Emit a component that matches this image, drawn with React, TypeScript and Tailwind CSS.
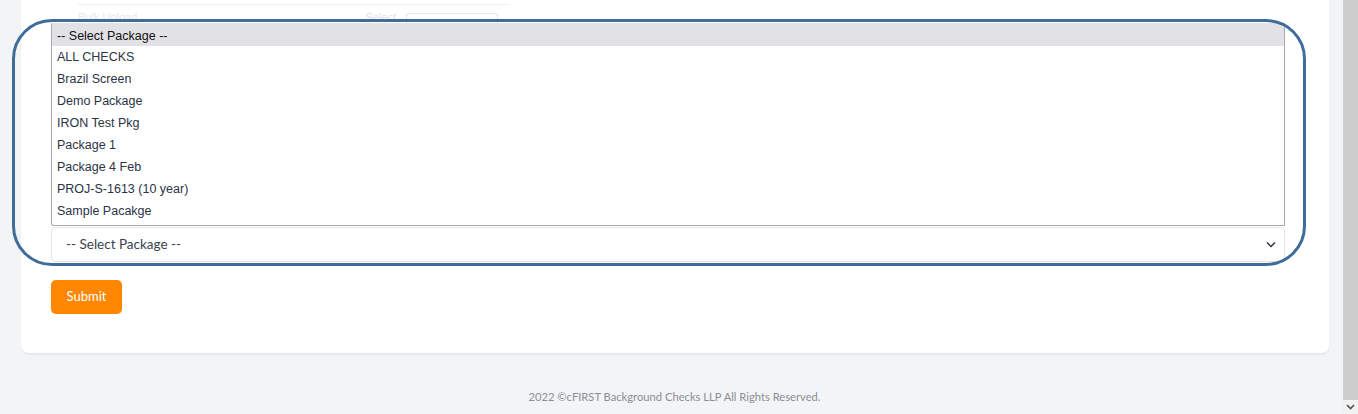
import React from "react";

const items = [
  "ALL CHECKS",
  "Brazil Screen",
  "Demo Package",
  "IRON Test Pkg",
  "Package 1",
  "Package 4 Feb",
  "PROJ-S-1613 (10 year)",
  "Sample Pacakge",
];

export default function App() {
  return (
    <div className="flex h-[414px] w-full overflow-hidden bg-[#f3f4f6]">
      <div className="flex min-w-0 flex-1 flex-col">
        <div className="ml-[21px] mr-[14px] rounded-b-[8px] border-b border-[#e6e7ea] bg-white pl-[30px] pr-[44px] pb-[39px] shadow-[0_1px_2px_rgba(0,0,0,0.04)]">
          {/* faded content behind the open list */}
          <div className="ml-[27px] w-[430px] border-b border-[#efefef] h-[5px]" />
          <div className="ml-[27px] flex h-[18px] w-[420px] items-end justify-between">
            <span className="text-[11px] leading-none text-[#e6e8eb] [font-family:'Liberation_Sans',Arial,sans-serif]">
              Bulk Upload
            </span>
            <div className="flex items-end gap-[10px]">
              <span className="text-[11px] leading-none text-[#dfe1e5] [font-family:'Liberation_Sans',Arial,sans-serif]">
                Select
              </span>
              <div className="h-[10px] w-[92px] rounded-t-[3px] border border-b-0 border-[#e6e8eb]" />
            </div>
          </div>

          <div className="relative mt-[204px]">
            {/* annotation outline */}
            <div className="pointer-events-none absolute -left-[39px] -right-[21px] -top-[208px] -bottom-[4px] z-20 rounded-[40px] border-[3px] border-[#3f6d9b]" />

            {/* open list */}
            <div className="absolute bottom-full left-0 right-0 z-10 mb-[1px] h-[203px] rounded-bl-[3px] border border-[#a9a9ad] border-t-[#e4e4e8] bg-white pt-0 [font-family:'Liberation_Sans',Arial,sans-serif] text-[12.5px]">
              <div className="flex h-[22px] items-center bg-[#e1e1e6] pl-[5px] pt-[2px] text-[#111]">
                -- Select Package --
              </div>
              {items.map((it) => (
                <div
                  key={it}
                  className="flex h-[22px] items-center pl-[5px] pt-[1.5px] text-[#2b3345]"
                >
                  {it}
                </div>
              ))}
            </div>

            {/* select */}
            <div className="flex h-[35px] items-center justify-between rounded-[4px] border border-[#e2e5ea] bg-white pl-[14px] pr-[8px] [font-family:Lato,'Noto_Sans',sans-serif] text-[13.5px] text-[#3b4253]">
              <span>-- Select Package --</span>
              <svg width="10" height="7" viewBox="0 0 10 7" fill="none">
                <path d="M1 1.5l4 4 4-4" stroke="#2f3545" strokeWidth="1.5" />
              </svg>
            </div>
          </div>

          <button className="mt-[18px] flex h-[34px] w-[71px] items-center justify-center rounded-[5px] bg-[#fd8700] text-[13px] text-white [font-family:Lato,'Noto_Sans',sans-serif]">
            Submit
          </button>
        </div>

        <div className="flex flex-1 items-center justify-center pl-[6px] pt-[26px] text-[11.2px] text-[#8a8e98] [font-family:Lato,'Noto_Sans',sans-serif]">
          2022 ©cFIRST Background Checks LLP All Rights Reserved.
        </div>
      </div>

      {/* scrollbar */}
      <div className="flex w-[15px] flex-col bg-[#f1f1f1]">
        <div className="flex-1 bg-[#cdcdcd]" />
        <div className="flex h-[14px] items-center justify-center">
          <svg width="9" height="6" viewBox="0 0 9 6" fill="none">
            <path d="M1 1l3.5 3.5L8 1" stroke="#505050" strokeWidth="1.6" />
          </svg>
        </div>
      </div>
    </div>
  );
}
